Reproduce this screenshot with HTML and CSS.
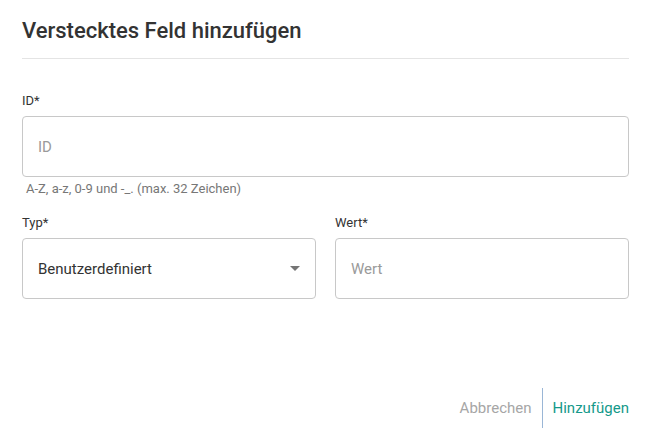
FILE: index.html
```html
<!DOCTYPE html>
<html lang="de">
<head>
<meta charset="utf-8">
<title>Verstecktes Feld hinzufügen</title>
<link rel="stylesheet" href="styles.css">
</head>
<body>
<div class="dialog">
  <h2 class="dialog-title">Verstecktes Feld hinzufügen</h2>
  <div class="dialog-body">
    <div class="field">
      <label class="field-label">ID*</label>
      <div class="input"><span class="placeholder">ID</span></div>
      <div class="hint">A-Z, a-z, 0-9 und -_. (max. 32 Zeichen)</div>
    </div>
    <div class="row">
      <div class="field">
        <label class="field-label">Typ*</label>
        <div class="input select">
          <span class="value">Benutzerdefiniert</span>
          <span class="caret"></span>
        </div>
      </div>
      <div class="field">
        <label class="field-label">Wert*</label>
        <div class="input"><span class="placeholder">Wert</span></div>
      </div>
    </div>
  </div>
  <div class="dialog-actions">
    <button class="btn btn-cancel">Abbrechen</button>
    <span class="sep"></span>
    <button class="btn btn-primary">Hinzufügen</button>
  </div>
</div>
</body>
</html>
```
FILE: styles.css
```css
html, body {
  margin: 0;
  padding: 0;
  background: #fff;
}
body {
  font-family: Roboto, "Liberation Sans", Arial, sans-serif;
  color: #333;
}
.dialog {
  width: 651px;
  height: 434px;
  box-sizing: border-box;
  padding: 0 22px;
  display: flex;
  flex-direction: column;
}
.dialog-title {
  margin: 0;
  padding: 18px 0 15px;
  font-size: 22px;
  line-height: 25px;
  font-weight: 500;
  color: #333;
  border-bottom: 1px solid #e4e4e4;
}
.dialog-body {
  padding-top: 34px;
  display: flex;
  flex-direction: column;
  gap: 18px;
}
.field {
  display: flex;
  flex-direction: column;
}
.field-label {
  font-size: 13px;
  line-height: 16px;
  color: #333;
  margin-bottom: 7px;
}
.input {
  height: 61px;
  box-sizing: border-box;
  border: 1px solid #c8c8c8;
  border-radius: 4px;
  display: flex;
  align-items: center;
  padding: 0 15px;
  font-size: 15px;
}
.placeholder {
  color: #9a9a9a;
}
.value {
  color: #333;
  flex: 1;
}
.caret {
  width: 0;
  height: 0;
  border-left: 5px solid transparent;
  border-right: 5px solid transparent;
  border-top: 5px solid #757575;
}
.hint {
  font-size: 13px;
  line-height: 16px;
  color: #777;
  margin-top: 4px;
  padding-left: 4px;
}
.row {
  display: grid;
  grid-template-columns: 1fr 1fr;
  gap: 19px;
}
.dialog-actions {
  margin-top: auto;
  margin-bottom: 6px;
  display: flex;
  justify-content: flex-end;
  align-items: center;
  height: 40px;
}
.btn {
  background: none;
  border: none;
  padding: 0;
  font-family: inherit;
  font-size: 15px;
  cursor: pointer;
}
.btn-cancel {
  color: #a6a6a6;
}
.btn-primary {
  color: #14998a;
}
.sep {
  width: 1px;
  height: 40px;
  background: #9ab6d6;
  margin: 0 10px;
}
```
